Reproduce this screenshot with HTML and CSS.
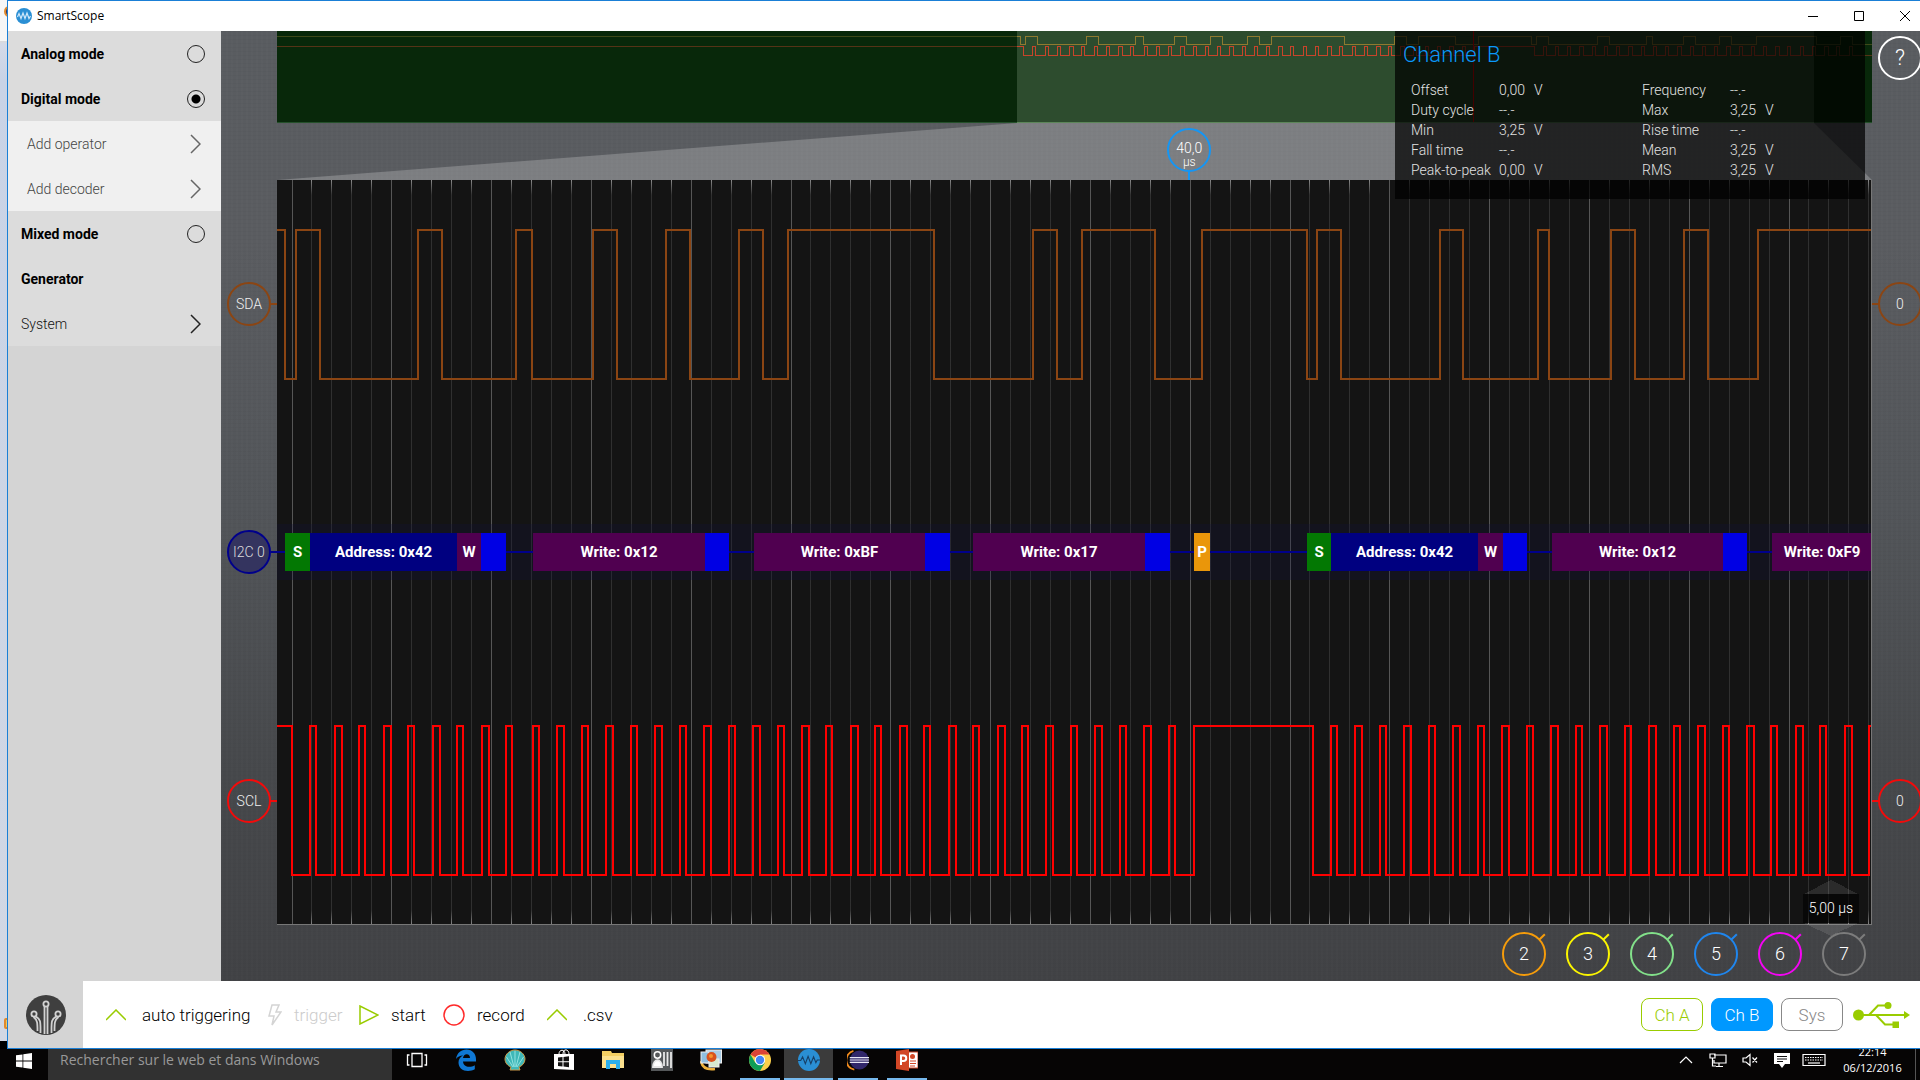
FILE: index.html
```html
<!DOCTYPE html>
<html lang="en">
<head>
<meta charset="utf-8">
<title>SmartScope</title>
<link rel="stylesheet" href="styles.css">
</head>
<body>
<div class="desktop">
  <div class="behind"><i class="behind-dot"></i><i class="behind-dot low"></i></div>
  <div class="window">
    <header class="titlebar">
      <svg class="app-icon" viewBox="0 0 16 16"><circle cx="8" cy="8" r="8" fill="#2a8fd4"/><path d="M1.500 9L3 5.500L5 10.500L7 5L9 10.500L11 5L13 10.500L14.500 8" fill="none" stroke="#cfe8fa" stroke-width="1.200"/></svg>
      <h1 class="title">SmartScope</h1>
      <button class="win-btn" aria-label="Minimize"><svg viewBox="0 0 10 10"><path d="M0 5.500H10"/></svg></button>
      <button class="win-btn" aria-label="Maximize"><svg viewBox="0 0 10 10"><path d="M.5.5H9.500V9.500H.5Z"/></svg></button>
      <button class="win-btn" aria-label="Close"><svg viewBox="0 0 10 10"><path d="M0 0L10 10M10 0L0 10"/></svg></button>
    </header>

    <div class="content">
      <nav class="sidebar">
        <label class="item strong">Analog mode<input type="radio" name="mode"></label>
        <label class="item strong">Digital mode<input type="radio" name="mode" checked></label>
        <button class="item sub">Add operator<svg class="chev" viewBox="0 0 11 20"><path d="M1 1L10 10L1 19"/></svg></button>
        <button class="item sub">Add decoder<svg class="chev" viewBox="0 0 11 20"><path d="M1 1L10 10L1 19"/></svg></button>
        <label class="item strong">Mixed mode<input type="radio" name="mode"></label>
        <button class="item strong">Generator</button>
        <button class="item">System<svg class="chev" viewBox="0 0 11 20"><path d="M1 1L10 10L1 19"/></svg></button>
      </nav>

      <main class="scope">
        <div class="overview">
          <svg class="fill" viewBox="0 0 1595 92" preserveAspectRatio="none">
            <rect width="1595" height="92" fill="#08280a"/>
            <rect x="740" width="797" height="92" fill="#2d4c2e"/>
            <path d="M0 91.500H740M1537 91.500H1595" stroke="#24502a"/>
            <path d="M740 91.500H1537" stroke="#5c8659"/>
            <g class="mini"><path id="ov-sda" stroke="#8f7a30"/><path id="ov-scl" stroke="#c8442a"/></g>
            <rect width="740" height="90" fill="#08280a" opacity=".6"/>
            <rect x="1537" width="58" height="90" fill="#08280a" opacity=".6"/>
            <path d="M1196.500 0V91" stroke="#f00000"/>
          </svg>
        </div>
        <div class="funnel">
          <svg class="fill" viewBox="0 0 1595 56" preserveAspectRatio="none"><path d="M740 0H1537L1595 56H0Z" fill="#fff" opacity=".21"/></svg>
          <div class="trigger-pos"><span>40,0</span><small>µs</small></div>
        </div>

        <div class="gutter left">
          <div class="lane"><button class="knob sda">SDA</button></div>
          <div class="lane"><button class="knob i2c">I2C 0</button></div>
          <div class="lane"><button class="knob scl">SCL</button></div>
        </div>

        <div class="plot">
          <svg class="fill" viewBox="0 0 1595 746" preserveAspectRatio="none">
            <defs><linearGradient id="fade" gradientUnits="userSpaceOnUse" x1="0" y1="0" x2="0" y2="746"><stop offset="0" stop-color="#888"/><stop offset=".02" stop-color="#303030"/><stop offset=".98" stop-color="#303030"/><stop offset="1" stop-color="#888"/></linearGradient></defs>
            <path id="minor" stroke="url(#fade)"/><path id="major" stroke="#565656"/>
          </svg>
          <div class="lane"><svg class="wave" viewBox="0 0 1595 151" preserveAspectRatio="none"><path id="sda" stroke="#8b4513"/></svg></div>
          <div class="lane">
            <div class="decode">
              <i class="wire" style="flex-grow:8"></i>
              <span class="seg start" style="flex-grow:25">S</span><span class="seg addr" style="flex-grow:147">Address: 0x42</span><span class="seg data" style="flex-grow:24">W</span><i class="seg ack" style="flex-grow:25"></i>
              <i class="wire" style="flex-grow:27"></i>
              <span class="seg data" style="flex-grow:172">Write: 0x12</span><i class="seg ack" style="flex-grow:24"></i>
              <i class="wire" style="flex-grow:25"></i>
              <span class="seg data" style="flex-grow:171">Write: 0xBF</span><i class="seg ack" style="flex-grow:25"></i>
              <i class="wire" style="flex-grow:23"></i>
              <span class="seg data" style="flex-grow:172">Write: 0x17</span><i class="seg ack" style="flex-grow:25"></i>
              <i class="wire" style="flex-grow:24"></i>
              <span class="seg stop" style="flex-grow:16">P</span>
              <i class="wire" style="flex-grow:97"></i>
              <span class="seg start" style="flex-grow:24">S</span><span class="seg addr" style="flex-grow:147">Address: 0x42</span><span class="seg data" style="flex-grow:25">W</span><i class="seg ack" style="flex-grow:24"></i>
              <i class="wire" style="flex-grow:25"></i>
              <span class="seg data" style="flex-grow:171">Write: 0x12</span><i class="seg ack" style="flex-grow:24"></i>
              <i class="wire" style="flex-grow:25"></i>
              <span class="seg data" style="flex-grow:100">Write: 0xF9</span>
            </div>
          </div>
          <div class="lane"><svg class="wave" viewBox="0 0 1595 151" preserveAspectRatio="none"><path id="scl" stroke="#ff0000"/></svg></div>
          <div class="timebase">
            <svg viewBox="0 0 56 56"><path d="M1 14L28 0L55 14ZM1 43H55L28 56Z" opacity=".1"/></svg>
            <span>5,00 µs</span>
          </div>
        </div>

        <div class="gutter right">
          <div class="lane"><button class="knob sda">0</button></div>
          <div class="lane"></div>
          <div class="lane"><button class="knob scl">0</button></div>
        </div>

        <div class="channels">
          <button class="ch c2">2</button><button class="ch c3">3</button><button class="ch c4">4</button><button class="ch c5">5</button><button class="ch c6">6</button><button class="ch c7">7</button>
        </div>

        <button class="help">?</button>

        <section class="measure">
          <h2>Channel B</h2>
          <table>
            <tr><th>Offset</th><td>0,00</td><td>V</td><th>Frequency</th><td>--.-</td><td></td></tr>
            <tr><th>Duty cycle</th><td>--.-</td><td></td><th>Max</th><td>3,25</td><td>V</td></tr>
            <tr><th>Min</th><td>3,25</td><td>V</td><th>Rise time</th><td>--.-</td><td></td></tr>
            <tr><th>Fall time</th><td>--.-</td><td></td><th>Mean</th><td>3,25</td><td>V</td></tr>
            <tr><th>Peak-to-peak</th><td>0,00</td><td>V</td><th>RMS</th><td>3,25</td><td>V</td></tr>
          </table>
        </section>
      </main>
    </div>

    <footer class="toolbar">
      <div class="logo"><svg viewBox="0 0 40 40"><circle cx="20" cy="20" r="20" fill="#3f3f3f"/><g fill="none" stroke="#d2d2d2" stroke-width="1.800"><circle cx="20" cy="9" r="2.600"/><circle cx="8" cy="19" r="2.600"/><circle cx="32" cy="19" r="2.600"/><path d="M18.500 39V12M21.500 39V12M9.500 21.500C15 24 14.500 27 14.500 38M30.500 21.500C25 24 25.500 27 25.500 38M7.500 22C11.500 25 11.500 28 11.500 36M32.500 22C28.500 25 28.500 28 28.500 36"/></g></svg></div>
      <button class="tool auto"><svg width="20" height="12" viewBox="0 0 20 12"><path d="M0 11L10 1L20 11" stroke="#99cc00"/></svg>auto triggering</button>
      <button class="tool trig" disabled><svg width="14" height="22" viewBox="0 0 14 22"><path d="M4 1H11L8 8H13L4 21L6 12H1Z" stroke="#d4d4d4"/></svg>trigger</button>
      <button class="tool start"><svg width="20" height="20" viewBox="0 0 20 20"><path d="M1 1V19L19 10Z" stroke="#99cc00"/></svg>start</button>
      <button class="tool rec"><svg width="22" height="22" viewBox="0 0 22 22"><circle cx="11" cy="11" r="10" stroke="#ff2a2a"/></svg>record</button>
      <button class="tool csv"><svg width="20" height="12" viewBox="0 0 20 12"><path d="M0 11L10 1L20 11" stroke="#99cc00"/></svg>.csv</button>
      <span class="spacer"></span>
      <button class="pill a">Ch A</button>
      <button class="pill b">Ch B</button>
      <button class="pill s">Sys</button>
      <svg class="usb" viewBox="0 0 57 26"><g fill="#99cc00"><circle cx="5.500" cy="13" r="5.500"/><circle cx="35" cy="3.500" r="3.500"/><path d="M51 9L57 13L51 17Z"/><rect x="39.500" y="19.500" width="6.500" height="6.500"/></g><path d="M5 13H52M16 13L25 3.500H34M23 13L32 22.500H40" fill="none" stroke="#99cc00" stroke-width="2"/></svg>
    </footer>
  </div>
</div>

<div class="taskbar">
  <button class="tb-start" aria-label="Start"><svg viewBox="0 0 16 16" fill="#fff"><path d="M0 2.300L6.500 1.400V7.600H0ZM7.300 1.300L16 0V7.600H7.300ZM0 8.400H6.500V14.600L0 13.700ZM7.300 8.400H16V16L7.300 14.700Z"/></svg></button>
  <input class="search" type="text" aria-label="Search" placeholder="Rechercher sur le web et dans Windows">
  <div class="apps">
    <button class="app" aria-label="Task view"><svg viewBox="0 0 22 22" fill="none" stroke="#fff" stroke-width="1.300"><path d="M6 4.500H16V17.500H6ZM3.500 6H1.500V16H3.500M18.500 6H20.500V16H18.500"/></svg></button>
    <button class="app" aria-label="Edge"><svg viewBox="0 0 22 22"><path d="M1 10C2 4 6 0.500 11.500 0.500C17.500 0.500 21 5 21 10V12.500H8C8.300 16.300 11 17.800 14 17.800C16.300 17.800 18 17.200 19.800 16.200V20.300C17.800 21.400 15.800 22 13 22C7.500 22 3.500 18.500 3.500 13.500C3.500 10.500 5 8 8 6.500C5 6.500 2.500 8 1 10ZM8 9H15C15 6.800 13.800 5.300 11.700 5.300C9.700 5.300 8.400 6.800 8 9Z" fill="#0f78d4" fill-rule="evenodd"/></svg></button>
    <button class="app" aria-label="Shell"><svg viewBox="0 0 22 22"><path d="M11 1C16 1 21 5 21 10C21 14 18 17 15 18L16 21H6L7 18C4 17 1 14 1 10C1 5 6 1 11 1Z" fill="#3fb8b8" stroke="#c99a4a"/><path d="M11 18V2M10 18L6 3M12 18L16 3M9 18L2.500 8M13 18L19.500 8" stroke="#a8ecea" stroke-width=".8"/></svg></button>
    <button class="app" aria-label="Store"><svg viewBox="0 0 22 22"><path d="M1 5H21V21L1 20Z" fill="#fff"/><path d="M6 5C6 0 12 0 12 5M10 5C10-1 16 0 16 5" fill="none" stroke="#fff"/><path d="M5 8.500L9.500 8V12.300H5ZM10.500 7.900L16 7.300V12.300H10.500ZM5 13.300H9.500V17.500L5 17ZM10.500 13.300H16V18.200L10.500 17.600Z" fill="#111"/></svg></button>
    <button class="app" aria-label="Explorer"><svg viewBox="0 0 22 22"><path d="M0 2H9L10 4H22V19H0Z" fill="#f3cf63"/><path d="M0 7H22V19H0Z" fill="#fbe18e"/><path d="M4 20V11H18V20H14V15H8V20Z" fill="#2bb0ee"/></svg></button>
    <button class="app" aria-label="Contacts"><svg viewBox="0 0 22 22"><rect width="22" height="22" fill="#55585a"/><circle cx="6.500" cy="6" r="3.200" fill="none" stroke="#fff" stroke-width="1.500"/><path d="M2 18C2 9 11 9 11 18ZM13 3V17M16.500 3V17M20 3V19" fill="#fff" stroke="#e8e8e8" stroke-width="1.800"/></svg></button>
    <button class="app" aria-label="Photos"><svg viewBox="0 0 22 22"><path d="M1 12C2 19 7 21 15 20" fill="none" stroke="#eeb23d" stroke-width="2.500"/><rect x="6" y="1" width="15.500" height="13" fill="#a9cde6" stroke="#eee"/><rect x="1" y="3" width="8" height="11" fill="#8fbfe0" stroke="#eee"/><rect x="9" y="10" width="10" height="8" fill="#d7ead0" stroke="#eee"/><circle cx="11.500" cy="8" r="5" fill="#d9531e"/><circle cx="11" cy="7" r="2" fill="#f6942e"/></svg></button>
    <button class="app open" aria-label="Chrome"><svg viewBox="0 0 22 22"><circle cx="11" cy="11" r="11" fill="#fcd04b"/><path d="M11 11L1.500 5.500A11 11 0 0 1 20.500 5.500H11Z" fill="#db4437"/><path d="M1.500 5.500A11 11 0 0 0 11 22L15.800 13.700L11 11L6.300 13.700Z" fill="#0f9d58"/><circle cx="11" cy="11" r="5.200" fill="#fff"/><circle cx="11" cy="11" r="4.200" fill="#4285f4"/></svg></button>
    <button class="app open active" aria-label="SmartScope"><svg viewBox="0 0 24 24"><circle cx="12" cy="12" r="12" fill="#2a8fd4"/><path d="M0 12.500H3L5 8.500L8 16L11 8L14 16L17 8.500L19.500 15L21 12H24" fill="none" stroke="#173f66" stroke-width="1.200"/></svg></button>
    <button class="app open" aria-label="Eclipse"><svg viewBox="0 0 24 22"><path d="M7 1A10.500 10.500 0 0 0 8 21.500" fill="none" stroke="#f08a1d" stroke-width="2"/><circle cx="13.500" cy="11" r="10.300" fill="#31276b"/><path d="M3 8.500H24M3 11H24M3 13.500H24" stroke="#e8e6f4" stroke-width="1.300"/></svg></button>
    <button class="app open" aria-label="PowerPoint"><svg viewBox="0 0 22 22"><rect x="10" y="3" width="12" height="16" fill="#fff" stroke="#d24726"/><path d="M14 12H20M14 14.500H20M14 17H19" stroke="#d24726"/><circle cx="16.500" cy="7.500" r="2.500" fill="#d24726"/><path d="M0 2L13 0V22L0 20Z" fill="#d24726"/><path d="M5 16V6.500H7.500A2.500 2.500 0 0 1 7.500 12H5" fill="none" stroke="#fff" stroke-width="2"/></svg></button>
  </div>
  <div class="tray">
    <svg viewBox="0 0 24 16"><path d="M6 11L12 5L18 11"/></svg>
    <svg viewBox="0 0 24 16"><path d="M8 3H20V11H8V8M13 11V14M10 14.500H17M4 2H9V6H4ZM6.500 6V14H10"/></svg>
    <svg viewBox="0 0 24 16"><path d="M5 6H8L12 2.500V13.500L8 10H5ZM14.500 5.500L19 10.500M19 5.500L14.500 10.500"/></svg>
    <svg viewBox="0 0 24 16"><path d="M4 1H20V12H15L12 16L9 12H4Z" fill="#fff" stroke="none"/><path d="M7 4.500H17M7 7H17M7 9.500H13" stroke="#111"/></svg>
    <svg viewBox="0 0 24 16"><path d="M1 2.500H23V13.500H1Z"/><path d="M3 5.500H21M3 8H21" stroke-dasharray="1.500 1"/><path d="M6 11H18"/></svg>
    <time class="clock"><span>22:14</span><span>06/12/2016</span></time>
  </div>
</div>
<script src="script.js"></script>
</body>
</html>
```
FILE: styles.css
```css
* { box-sizing: border-box; }
body {
  margin: 0;
  height: 100vh;
  display: flex;
  flex-direction: column;
  overflow: hidden;
  background: #000;
  font-family: Roboto, sans-serif;
  font-weight: 300;
  font-size: 14px;
  line-height: 20px;
  color: #111;
}
button, input { font: inherit; color: inherit; }
button { border: 0; padding: 0; background: none; white-space: nowrap; }

.desktop { flex: 1; min-height: 0; display: flex; }
.behind {
  width: 7px;
  margin-bottom: 8px;
  position: relative;
  overflow: hidden;
  background: linear-gradient(#f6f6f6 41px, #dadada 41px, #d4dae8 44px, #c9d3e6 80px, #d2d8e4 100%);
}
.behind-dot { position: absolute; left: 4px; top: 6px; width: 10px; height: 11px; border-radius: 50%; background: #3a3560; border: 2px solid #e08a2c; }
.behind-dot.low { top: auto; bottom: 12px; border-radius: 2px; background: #f0c860; }
.window {
  flex: 1;
  min-width: 0;
  display: flex;
  flex-direction: column;
  border: solid #1a7fd6;
  border-width: 1px 0 1px 1px;
  background: #fff;
}
.titlebar { height: 30px; display: flex; align-items: center; padding-left: 8px; }
.app-icon { width: 16px; height: 16px; margin-right: 5px; }
.title { flex: 1; margin: 0; font: 12px/16px "Open Sans", sans-serif; color: #000; }
.win-btn { width: 46px; height: 30px; display: grid; place-items: center; }
.win-btn:last-child { margin-right: -8px; }
.win-btn svg { width: 10px; height: 10px; fill: none; stroke: #000; overflow: visible; }

.content { flex: 1; min-height: 0; display: flex; }
.sidebar { width: 213px; background: #d4d4d4; display: flex; flex-direction: column; }
.item {
  height: 45px;
  display: flex;
  align-items: center;
  justify-content: space-between;
  padding: 0 16px 0 13px;
  background: #dcdcdc;
  text-align: left;
}
.item.strong { font-weight: bold; color: #000; }
.item.sub { background: #f0f0f0; color: #444; padding-left: 19px; }
.item input {
  appearance: none;
  margin: 0;
  width: 18px;
  height: 18px;
  border: 1px solid #222;
  border-radius: 50%;
}
.item input:checked { background: radial-gradient(circle, #000 4px, transparent 5px); }
.chev { width: 11px; height: 20px; margin-right: 4px; fill: none; stroke: #222; stroke-width: 1.5; }
.sub .chev { stroke: #666; }

.scope {
  flex: 1;
  min-width: 0;
  position: relative;
  overflow: hidden;
  display: grid;
  grid-template: 92px 57px minmax(0, 1fr) 56px / 56px minmax(0, 1fr) 48px;
  background:
    repeating-linear-gradient(90deg, rgba(255,255,255,.012) 0 2px, transparent 2px 5px),
    repeating-linear-gradient(rgba(0,0,0,.02) 0 1px, transparent 1px 4px),
    linear-gradient(#595c60, #5a5c60 22%, #525559 50%, #46484b 78%, #414245);
}
.fill { display: block; width: 100%; height: 100%; }
.overview { grid-area: 1 / 2; }
.mini { fill: none; }
.funnel { grid-area: 2 / 2; position: relative; }
.trigger-pos {
  position: absolute;
  left: 57.2%;
  top: 5px;
  width: 44px;
  height: 44px;
  margin-left: -22px;
  border: 2px solid #1496f5;
  border-radius: 50%;
  display: flex;
  flex-direction: column;
  align-items: center;
  padding-top: 10px;
  color: #fff;
  line-height: 16px;
}
.trigger-pos small { font-size: 12px; line-height: 12px; }
.trigger-pos::after { content: ""; position: absolute; top: 42px; left: 19px; width: 2px; height: 9px; background: #1496f5; }

.gutter { display: flex; flex-direction: column; }
.gutter.left { grid-area: 3 / 1; }
.gutter.right { grid-area: 3 / 3; }
.lane { flex: 1; min-height: 0; display: flex; align-items: center; }
.gutter .lane { padding-left: 6px; }
.knob {
  flex: none;
  position: relative;
  width: 44px;
  height: 44px;
  border: 2px solid;
  border-radius: 50%;
  color: #f0f0f0;
}
.knob.sda { border-color: #8b4513; }
.knob.i2c { border-color: #00008b; background: #34345f; color: #ddd; }
.knob.scl { border-color: #f40a0a; }
.knob::after { content: ""; position: absolute; top: 19px; left: 42px; width: 6px; height: 2px; background: #8b4513; }
.gutter.right .knob::after { left: -8px; }
.knob.i2c::after { background: #00008b; }
.knob.scl::after { background: #f40a0a; }

.plot {
  grid-area: 3 / 2;
  position: relative;
  display: flex;
  flex-direction: column;
  background: #141414;
}
.plot > .fill { position: absolute; inset: 0; }
.plot::after { content: ""; position: absolute; inset: 0; border: solid #777; border-width: 0 1px 1px 0; pointer-events: none; }
.plot path, .mini path { fill: none; shape-rendering: crispEdges; }
.plot .lane { position: relative; }
.wave { width: 100%; height: 151px; overflow: hidden; }
.wave path { stroke-width: 2px; vector-effect: non-scaling-stroke; }
.decode {
  flex: 1;
  min-width: 0;
  height: 56px;
  display: flex;
  align-items: center;
  background: rgba(16, 16, 60, .25);
  font-size: 15px;
}
.decode > * { flex-basis: 0; min-width: 0; }
.wire { height: 2px; background: #00008b; }
.seg { height: 38px; line-height: 38px; text-align: center; font-weight: bold; color: #fff; white-space: nowrap; overflow: hidden; }
.seg.start { background: #037803; }
.seg.addr { background: #000080; }
.seg.data { background: #500050; }
.seg.ack { background: #0000e4; }
.seg.stop { background: #ea960a; }

.timebase { position: absolute; z-index: 1; right: 13px; bottom: -11px; width: 56px; height: 56px; color: #fff; }
.timebase svg { position: absolute; inset: 0; }
.timebase span { position: absolute; top: 14px; left: 0; width: 56px; height: 29px; line-height: 29px; text-align: center; white-space: nowrap; background: rgba(0, 0, 0, .6); }
.timebase path { fill: #fff; }

.channels { grid-area: 4 / 1 / 5 / 4; display: flex; justify-content: flex-end; gap: 20px; padding: 7px 54px 0 0; }
.ch { position: relative; width: 44px; height: 44px; border: 2px solid; border-radius: 50%; font-size: 18px; color: var(--ring); -webkit-text-fill-color: #fff; }
.ch::after { content: ""; position: absolute; left: 34px; top: 2px; width: 8px; height: 2px; background: currentColor; transform: rotate(-45deg); }
.c2 { --ring: #f59c0b; }
.c3 { --ring: #fbf500; }
.c4 { --ring: #82e08a; }
.c5 { --ring: #1f86ee; }
.c6 { --ring: #f405f4; }
.c7 { --ring: #7c7c7c; }

.help { position: absolute; right: -2px; top: 5px; width: 44px; height: 44px; border: 2px solid #fff; border-radius: 50%; color: #fff; font-size: 22px; }

.measure { position: absolute; top: 0; right: 55px; width: 470px; height: 168px; padding: 8px 0 0 8px; background: rgba(0, 0, 0, .72); color: #e2e2e2; }
.measure h2 { margin: 0 0 9px; font-size: 22px; line-height: 32px; font-weight: 300; color: #0a98fa; }
.measure table { margin-left: 8px; border-collapse: collapse; table-layout: fixed; width: 390px; }
.measure th, .measure td { padding: 0; height: 20px; font-weight: 300; text-align: left; white-space: nowrap; }
.measure tr > :nth-child(1), .measure tr > :nth-child(4) { width: 88px; }
.measure tr > :nth-child(2), .measure tr > :nth-child(5) { width: 35px; }
.measure tr > :nth-child(3) { width: 108px; }

.toolbar { height: 67px; display: flex; align-items: center; padding-right: 10px; }
.logo { width: 75px; height: 67px; background: #d4d4d4; display: grid; place-items: center; margin-right: 23px; }
.logo svg { width: 40px; height: 40px; }
.tool { display: flex; align-items: center; font-size: 17px; color: #000; }
.tool svg { fill: none; stroke-width: 1.5; margin-right: 16px; }
.auto { width: 162px; }
.trig { width: 91px; color: #ccc; }
.trig svg, .start svg, .rec svg { margin-right: 12px; }
.start { width: 84px; }
.rec { width: 104px; }
.spacer { flex: 1; }
.pill { width: 62px; height: 33px; margin-right: 8px; border: 1px solid; border-radius: 8px; font-size: 17px; }
.pill.a { color: #99cc00; }
.pill.b { color: #fff; background: #0098ff; border-color: #0098ff; }
.pill.s { color: #888; }
.usb { width: 57px; height: 26px; margin-left: 2px; }

.taskbar { height: 31px; display: flex; background: #060505; overflow: hidden; }
.tb-start { width: 48px; display: flex; align-items: flex-start; justify-content: center; padding-top: 4px; }
.tb-start svg { width: 16px; height: 16px; }
.search { width: 344px; border: 0; padding: 0 12px 9px; background: #313131; font: 14px/20px "Open Sans", sans-serif; color: #999; outline: 0; }
.search::placeholder { color: #999; opacity: 1; }
.apps { flex: 1; display: flex; }
.app { width: 49px; height: 31px; display: flex; justify-content: center; }
.app svg { width: 22px; height: 22px; }
.app.open { background: linear-gradient(#76b9ed, #76b9ed) bottom / 40px 2px no-repeat; }
.app.active { background-color: #3b3b3b; background-size: 49px 2px; }
.tray { display: flex; padding-right: 4px; }
.tray svg { width: 24px; height: 16px; margin: 3px 4px 0; fill: none; stroke: #fff; stroke-width: 1.2; }
.clock { width: 86px; margin-top: -5px; border-right: 1px solid #555; display: flex; flex-direction: column; align-items: center; font: 11px/16px "Open Sans", sans-serif; color: #fff; }
```
FILE: script.js
```js
// Edge positions along the 1595-unit time axis; each edge toggles the line level, starting high.
const sda = [8, 19, 43, 141, 165, 239, 255, 316, 340, 389, 413, 462, 486, 511, 657, 756, 780, 805,
  878, 925, 1030, 1040, 1064, 1163, 1186, 1261, 1272, 1334, 1358, 1407, 1431, 1481, 1600, 1649, 1673];

const scl = [15];
const pulses = (first, count, pitch) => {
  for (let i = 0; i < count; i++) {
    const rise = Math.round(first + i * pitch);
    scl.push(rise, rise + 6 + (i % 2 ? 1 : 0));
  }
};
pulses(33, 9, 24.5);
pulses(256, 27, 24.45);
scl.push(917, 1036);
pulses(1054, 26, 24.47);

function wave(edges, high, low, end, map) {
  let level = high;
  let d = `M${map(0)} ${high}`;
  for (const x of edges) {
    if (x > end) break;
    level = level === high ? low : high;
    d += `H${map(x)}V${level}`;
  }
  return d + `H${map(end)}`;
}
const set = (id, d) => document.getElementById(id).setAttribute('d', d);
const same = x => x;
const mini = x => Math.floor(739 + x / 2) + 0.5;

set('sda', wave(sda, 1, 150, 1595, same));
set('scl', wave(scl, 1, 150, 1595, same));
set('ov-sda', 'M0 5.5H740' + wave(sda, 5.5, 13.5, 1712, mini));
set('ov-scl', 'M0 15.5H740' + wave(scl, 15.5, 24.5, 1712, mini));

let minor = '', major = '';
for (let i = 0; i < 80; i++) {
  const line = `M${Math.floor(15 + i * 19.96) + 0.5} 0V746`;
  if (i % 5) minor += line; else major += line;
}
set('minor', minor);
set('major', major);
```
